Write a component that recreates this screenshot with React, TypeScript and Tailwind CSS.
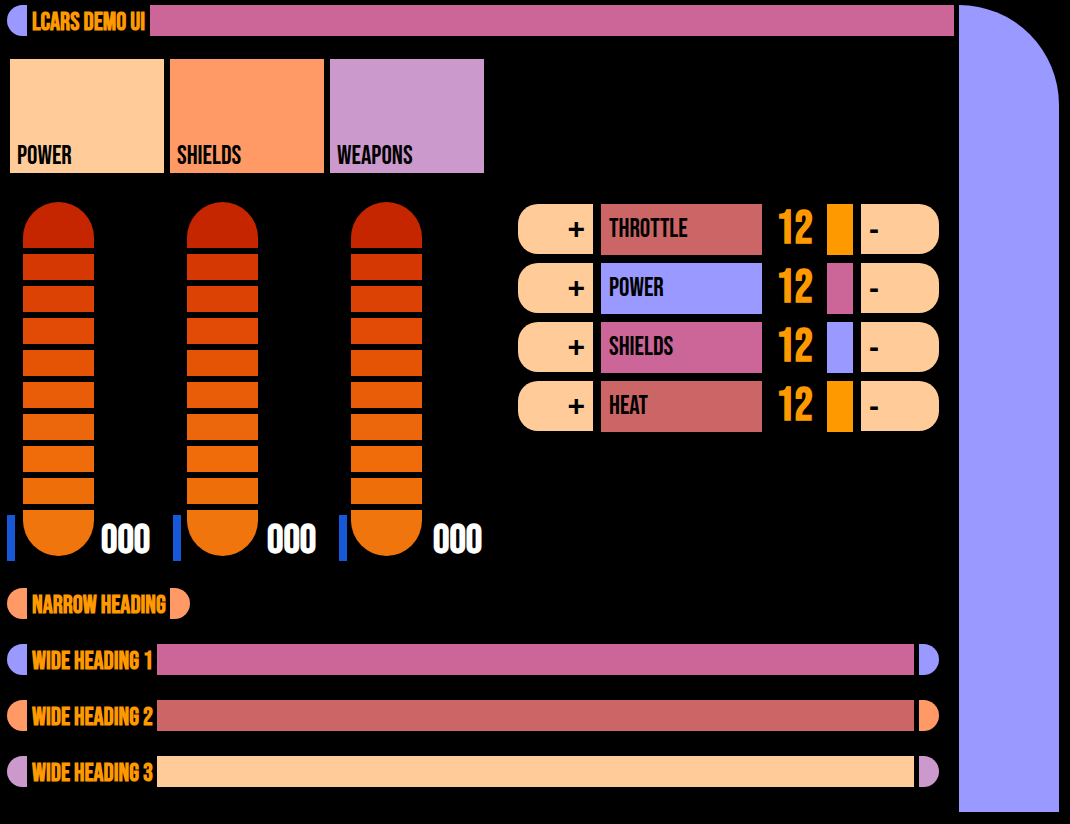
const MODES = [
  { label: "Power", color: "bg-[#ffcc99]" },
  { label: "Shields", color: "bg-[#ff9966]" },
  { label: "Weapons", color: "bg-[#cc99cc]" },
];

const SEGMENTS = [
  "h-[46px] rounded-t-full bg-[#c52600]",
  "h-[26px] bg-[#d63804]",
  "h-[26px] bg-[#dc4204]",
  "h-[26px] bg-[#e24b06]",
  "h-[26px] bg-[#e55305]",
  "h-[26px] bg-[#e95d08]",
  "h-[26px] bg-[#ec660b]",
  "h-[26px] bg-[#f06c0a]",
  "h-[26px] bg-[#ee6e09]",
  "h-[46px] rounded-b-full bg-[#f0750d]",
];

const METERS = ["a", "b", "c"];

const CONTROLS = [
  { label: "Throttle", value: 12, color: "bg-[#cc6666]", tag: "bg-[#ff9900]" },
  { label: "Power", value: 12, color: "bg-[#9999ff]", tag: "bg-[#cc6699]" },
  { label: "Shields", value: 12, color: "bg-[#cc6699]", tag: "bg-[#9999ff]" },
  { label: "Heat", value: 12, color: "bg-[#cc6666]", tag: "bg-[#ff9900]" },
];

const WIDE_HEADINGS = [
  { label: "Wide Heading 1", cap: "bg-[#9999ff]", bar: "bg-[#cc6699]" },
  { label: "Wide Heading 2", cap: "bg-[#ff9966]", bar: "bg-[#cc6666]" },
  { label: "Wide Heading 3", cap: "bg-[#cc99cc]", bar: "bg-[#ffcc99]" },
];

const HEADING_TEXT =
  "shrink-0 whitespace-nowrap pt-0.5 text-[25px] leading-[31px] font-bold text-[#ff9900]";

const STEP_BUTTON =
  "flex h-[50px] items-center bg-[#ffcc99] px-2 font-['Liberation_Sans',sans-serif] text-[30px] leading-none font-bold text-black";

function Meter() {
  return (
    <div className="flex w-[71px] flex-col gap-1.5">
      {SEGMENTS.map((segment, i) => (
        <div key={i} className={segment} />
      ))}
    </div>
  );
}

function Control({ label, value, color, tag }: (typeof CONTROLS)[number]) {
  return (
    <div className="flex h-[51px] items-start gap-2">
      <button
        aria-label={`Increase ${label}`}
        className={`w-[75px] justify-end rounded-l-[20px] ${STEP_BUTTON}`}
      >
        +
      </button>
      <div className={`flex h-full w-[161px] items-center px-2 text-[26px] leading-none text-black ${color}`}>
        {label}
      </div>
      <output className="flex h-full w-[49px] items-center justify-center text-[46px] leading-none font-bold text-[#ff9900]">
        {value}
      </output>
      <div className={`h-full w-[26px] ${tag}`} />
      <button
        aria-label={`Decrease ${label}`}
        className={`w-[78px] rounded-r-[20px] ${STEP_BUTTON}`}
      >
        -
      </button>
    </div>
  );
}

export default function App() {
  return (
    <div className="flex min-h-screen gap-[5px] bg-black pt-[5px] pr-[11px] pb-3 pl-[7px] font-['Bebas_Neue','Oswald','Open_Sans_Condensed','Liberation_Sans',sans-serif] uppercase">
      <main className="min-w-0 flex-1">
        <header className="flex h-[31px] gap-[5px]">
          <div className="w-5 rounded-l-full bg-[#9999ff]" />
          <h1 className={`w-[113px] ${HEADING_TEXT}`}>LCARS Demo UI</h1>
          <div className="flex-1 bg-[#cc6699]" />
        </header>

        <nav className="mt-[23px] flex gap-1.5 pl-[3px]">
          {MODES.map((mode) => (
            <button
              key={mode.label}
              className={`flex h-[114px] w-[154px] items-end px-[7px] pb-0.5 text-left text-[26px] leading-[28px] text-black uppercase ${mode.color}`}
            >
              {mode.label}
            </button>
          ))}
        </nav>

        <div className="mt-[29px] flex items-start justify-between pr-[15px]">
          <section className="grid" aria-label="Meters">
            <div className="col-start-1 row-start-1 mb-[5px] flex gap-[93px] pl-4">
              {METERS.map((id) => (
                <Meter key={id} />
              ))}
            </div>
            <div className="col-start-1 row-start-1 flex items-end self-end">
              {METERS.map((id) => (
                <div key={id} className="flex h-[46px] w-[166px] items-center gap-[86px]">
                  <div className="h-full w-2 bg-[#1558d8]" />
                  <output className="pt-1 text-[41px] leading-none font-bold text-white">000</output>
                </div>
              ))}
            </div>
          </section>

          <section className="mt-0.5 flex flex-col gap-2" aria-label="Controls">
            {CONTROLS.map((control) => (
              <Control key={control.label} {...control} />
            ))}
          </section>
        </div>

        <div className="mt-[27px] flex h-[31px] gap-[5px]">
          <div className="w-5 rounded-l-full bg-[#ff9966]" />
          <h2 className={`w-[133px] ${HEADING_TEXT}`}>Narrow Heading</h2>
          <div className="w-5 rounded-r-full bg-[#ff9966]" />
        </div>

        {WIDE_HEADINGS.map((heading) => (
          <div key={heading.label} className="mt-[25px] flex h-[31px] gap-[5px] pr-[15px]">
            <div className={`w-5 rounded-l-full ${heading.cap}`} />
            <h2 className={`w-[120px] ${HEADING_TEXT}`}>{heading.label}</h2>
            <div className={`flex-1 ${heading.bar}`} />
            <div className={`w-5 rounded-r-full ${heading.cap}`} />
          </div>
        ))}
      </main>
      <aside className="w-[100px] shrink-0 rounded-tr-[100px] bg-[#9999ff]" />
    </div>
  );
}
